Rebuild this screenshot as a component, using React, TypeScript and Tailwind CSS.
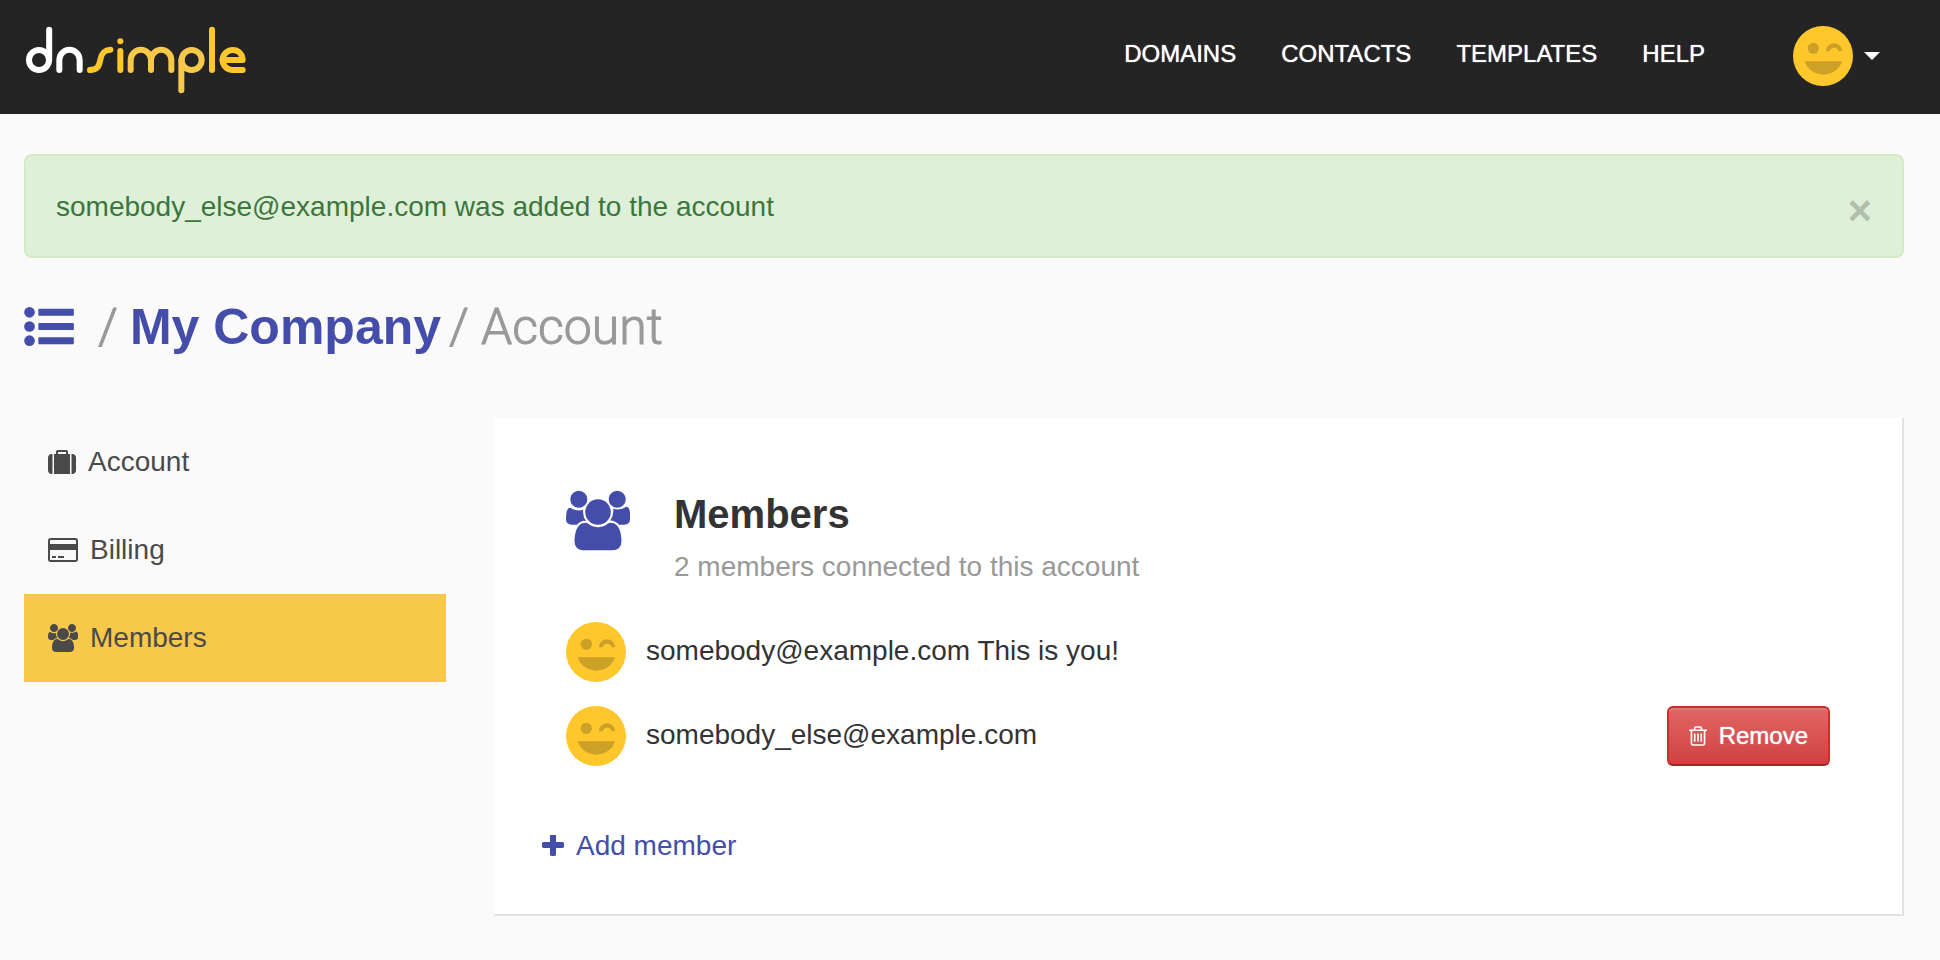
import type { ReactNode } from "react";

type IconProps = { className?: string };

function Logo() {
  return (
    <svg viewBox="72 72 672 216" className="h-[72px] w-[224px]" fill="none" strokeWidth="18" strokeLinecap="round" strokeLinejoin="round" aria-hidden="true">
      <g stroke="#ffffff">
        <circle cx="117" cy="180" r="30" />
        <path d="M147.500 89V180" />
        <path d="M178 210V180a30.500 30.500 0 0 1 61 0V210" />
      </g>
      <g stroke="#f7c84a">
        <path d="M392 210V180a30.500 30.500 0 0 1 61 0V210M453 180a30.500 30.500 0 0 1 61 0V210" />
        <path d="M544 271V180" />
        <circle cx="575" cy="180" r="30" />
      </g>
      <g stroke="#ffc72c">
        <path d="M270 210C291 209 297 201 301 179C305 158 313 150 331 149" />
        <path d="M361 153V210" />
        <path d="M636 89V210" />
        <path d="M667 180H728C727 161 714 150 698 150a30 30 0 0 0 0 60H728" />
      </g>
      <circle cx="361" cy="124" r="9" fill="#ffc72c" />
    </svg>
  );
}

function Avatar() {
  return (
    <svg viewBox="0 0 180 180" className="size-[60px] shrink-0" aria-hidden="true">
      <circle cx="90" cy="90" r="90" fill="#ffc72c" />
      <g fill="#cca127">
        <circle cx="61" cy="67" r="17" />
        <path d="M99 74C101 61 111 52 123 52S145 61 148 74C141 78 137 75 135 71C128 63 118 64 112 71C109 77 103 78 99 74Z" />
        <path d="M35 106H147C140 130 116 146 91 146S42 130 35 106Z" />
      </g>
    </svg>
  );
}

function UsersIcon({ className }: IconProps) {
  return (
    <svg viewBox="0 0 1920 1792" className={className} fill="currentColor" aria-hidden="true">
      <path d="M593 896q-162 5-265 128h-134q-82 0-138-40.500t-56-118.500q0-353 124-353 6 0 43.500 21t97.500 42.500 119 21.500q67 0 133-23-5 37-5 66 0 159 93 286zm1071 637q0 120-73 189.500t-194 69.500h-874q-121 0-194-69.500t-73-189.500q0-53 3.500-103.500t14-109 26.500-108.500 43-97.500 62-81 85.500-53.500 111.500-20q10 0 43 21.500t73 48 107 48 135 21.500 135-21.500 107-48 73-48 43-21.500q61 0 111.500 20t85.500 53.500 62 81 43 97.500 26.500 108.500 14 109 3.500 103.500zm-1024-1277q0 106-75 181t-181 75-181-75-75-181 75-181 181-75 181 75 75 181zm704 384q0 159-112.500 271.500t-271.500 112.500-271.500-112.500-112.500-271.500 112.500-271.500 271.500-112.500 271.500 112.500 112.500 271.500zm576 225q0 78-56 118.500t-138 40.500h-134q-103-123-265-128 93-127 93-286 0-29-5-66 66 23 133 23 59 0 119-21.500t97.500-42.500 43.500-21q124 0 124 353zm-128-609q0 106-75 181t-181 75-181-75-75-181 75-181 181-75 181 75 75 181z" />
    </svg>
  );
}

function SuitcaseIcon({ className }: IconProps) {
  return (
    <svg viewBox="0 0 1792 1792" className={className} fill="currentColor" aria-hidden="true">
      <path d="M640 384h512v-128h-512v128zm-352 0v1280h-64q-92 0-158-66t-66-158v-832q0-92 66-158t158-66h64zm1120 0v1280h-1024v-1280h128v-160q0-40 28-68t68-28h576q40 0 68 28t28 68v160h128zm384 224v832q0 92-66 158t-158 66h-64v-1280h64q92 0 158 66t66 158z" />
    </svg>
  );
}

function CardIcon({ className }: IconProps) {
  return (
    <svg viewBox="0 0 1920 1792" className={className} fill="currentColor" aria-hidden="true">
      <path d="M1760 128q66 0 113 47t47 113v1216q0 66-47 113t-113 47h-1600q-66 0-113-47t-47-113v-1216q0-66 47-113t113-47h1600zm-1600 128q-13 0-22.500 9.500t-9.500 22.500v224h1664v-224q0-13-9.500-22.500t-22.500-9.500h-1600zm1600 1280q13 0 22.500-9.500t9.500-22.500v-608h-1664v608q0 13 9.500 22.500t22.500 9.500h1600zm-1504-128v-128h256v128h-256zm384 0v-128h384v128h-384z" />
    </svg>
  );
}

function TrashIcon({ className }: IconProps) {
  return (
    <svg viewBox="192 128 1408 1536" className={className} fill="currentColor" aria-hidden="true">
      <path d="M704 736v576q0 14-9 23t-23 9h-64q-14 0-23-9t-9-23v-576q0-14 9-23t23-9h64q14 0 23 9t9 23zm256 0v576q0 14-9 23t-23 9h-64q-14 0-23-9t-9-23v-576q0-14 9-23t23-9h64q14 0 23 9t9 23zm256 0v576q0 14-9 23t-23 9h-64q-14 0-23-9t-9-23v-576q0-14 9-23t23-9h64q14 0 23 9t9 23zm128 724v-948h-896v948q0 22 7 40.500t14.500 27 10.500 8.500h832q3 0 10.500-8.500t14.500-27 7-40.500zm-672-1076h448l-48-117q-7-9-17-11h-317q-10 2-17 11zm928 32v64q0 14-9 23t-23 9h-96v948q0 83-47 143.500t-113 60.500h-832q-66 0-113-58.500t-47-141.500v-952h-96q-14 0-23-9t-9-23v-64q0-14 9-23t23-9h309l70-167q15-37 54-63t79-26h320q40 0 79 26t54 63l70 167h309q14 0 23 9t9 23z" />
    </svg>
  );
}

function PlusIcon({ className }: IconProps) {
  return (
    <svg viewBox="192 192 1408 1408" className={className} fill="currentColor" aria-hidden="true">
      <path d="M1600 736v192q0 40-28 68t-68 28h-416v416q0 40-28 68t-68 28h-192q-40 0-68-28t-28-68v-416h-416q-40 0-68-28t-28-68v-192q0-40 28-68t68-28h416v-416q0-40 28-68t68-28h192q40 0 68 28t28 68v416h416q40 0 68 28t28 68z" />
    </svg>
  );
}

function ListIcon({ className }: IconProps) {
  return (
    <svg viewBox="0 0 1792 1408" className={className} fill="currentColor" aria-hidden="true">
      <circle cx="192" cy="192" r="192" />
      <circle cx="192" cy="704" r="192" />
      <circle cx="192" cy="1216" r="192" />
      <rect x="512" y="64" width="1280" height="256" rx="32" />
      <rect x="512" y="576" width="1280" height="256" rx="32" />
      <rect x="512" y="1088" width="1280" height="256" rx="32" />
    </svg>
  );
}

function SideLink({ icon, label, active = false }: { icon: ReactNode; label: string; active?: boolean }) {
  return (
    <a
      href="#"
      aria-current={active ? "page" : undefined}
      className={active ? "flex h-[88px] items-center gap-3 bg-[#f7c84a] px-6" : "flex h-[88px] items-center gap-3 px-6"}
    >
      {icon}
      <span>{label}</span>
    </a>
  );
}

function Member({ children, action }: { children: ReactNode; action?: ReactNode }) {
  return (
    <li className="flex items-center gap-5">
      <Avatar />
      <span className="grow pb-0.5">{children}</span>
      {action}
    </li>
  );
}

const navItems = ["DOMAINS", "CONTACTS", "TEMPLATES", "HELP"];

export default function App() {
  return (
    <div className="min-h-screen bg-[#fafafa] font-['Liberation_Sans',Arial,sans-serif] text-[28px] leading-10 text-[#333]">
      <header className="flex h-[114px] items-center justify-between bg-[#242424] pr-[60px] pb-0.5 pl-6">
        <a href="#" aria-label="dnsimple" className="pt-2">
          <Logo />
        </a>
        <div className="flex items-center gap-[88px] text-white">
          <nav className="flex gap-[45px] pb-1 text-2xl [text-shadow:0_0_1px_currentColor]">
            {navItems.map((item) => (
              <a key={item} href="#">
                {item}
              </a>
            ))}
          </nav>
          <button type="button" aria-label="User menu" className="flex items-center gap-[11px]">
            <Avatar />
            <svg viewBox="0 0 16 8" className="h-2 w-4" fill="currentColor" aria-hidden="true">
              <path d="M0 0H16L8 8Z" />
            </svg>
          </button>
        </div>
      </header>

      <main className="pt-10 pr-9 pb-11 pl-6">
        <div role="alert" className="flex h-[104px] items-center justify-between rounded-lg border-2 border-[#d6e9c6] bg-[#dff0d8] px-[30px] pt-0.5 text-[#3c763d]">
          <p>somebody_else@example.com was added to the account</p>
          <button type="button" aria-label="Close" className="pt-2 text-[42px] font-bold text-black opacity-20">
            ×
          </button>
        </div>

        <h1 className="mt-[34px] flex h-[68px] items-center text-[50px] font-normal text-[#999]">
          <a href="#" aria-label="All accounts" className="mr-6 text-[#444da9]">
            <ListIcon className="h-[39px] w-[50px]" />
          </a>
          <span className="flex pt-0.5">
            <span className="font-['Roboto',sans-serif] font-light [-webkit-text-stroke:1px]">/</span>
            <a href="#" className="mr-2 ml-3 font-bold text-[#444da9]">
              My Company
            </a>
            <span className="font-['Roboto',sans-serif] font-light [-webkit-text-stroke:1px]">/</span>
            <span className="ml-3 font-['Roboto',sans-serif] font-light [-webkit-text-stroke:1px]">Account</span>
          </span>
        </h1>

        <div className="mt-[58px] flex items-start">
          <nav className="w-1/4 pr-12 text-[#4a4a4a]">
            <SideLink label="Account" icon={<SuitcaseIcon className="size-7" />} />
            <SideLink label="Billing" icon={<CardIcon className="h-7 w-[30px]" />} />
            <SideLink label="Members" active icon={<UsersIcon className="h-7 w-[30px]" />} />
          </nav>

          <section className="w-3/4 border-r-2 border-b-2 border-[#e2e2e2] bg-white px-12 pt-[70px] pb-[46px]">
            <div className="flex gap-11 px-6">
              <UsersIcon className="mt-0.5 h-[61px] w-16 shrink-0 text-[#444da9]" />
              <div>
                <h2 className="text-[40px] leading-[52px] font-bold">Members</h2>
                <p className="leading-[54px] text-[#999]">2 members connected to this account</p>
              </div>
            </div>
            <ul className="mt-7 flex flex-col gap-6 px-6">
              <Member>somebody@example.com This is you!</Member>
              <Member
                action={
                  <button
                    type="button"
                    className="flex h-[60px] items-center gap-3 rounded-md border-2 border-[#c9302c] border-b-[#a02328] bg-linear-to-b from-[#e06666] to-[#d14040] px-5 text-2xl text-white shadow-[inset_0_2px_0_rgba(255,255,255,0.12)] [text-shadow:0_0_1px_currentColor]"
                  >
                    <TrashIcon className="h-5 w-[18px]" />
                    Remove
                  </button>
                }
              >
                somebody_else@example.com
              </Member>
            </ul>
            <a href="#" className="mt-[60px] inline-flex items-center gap-3 text-[#444da9]">
              <PlusIcon className="size-[22px]" />
              Add member
            </a>
          </section>
        </div>
      </main>
    </div>
  );
}
